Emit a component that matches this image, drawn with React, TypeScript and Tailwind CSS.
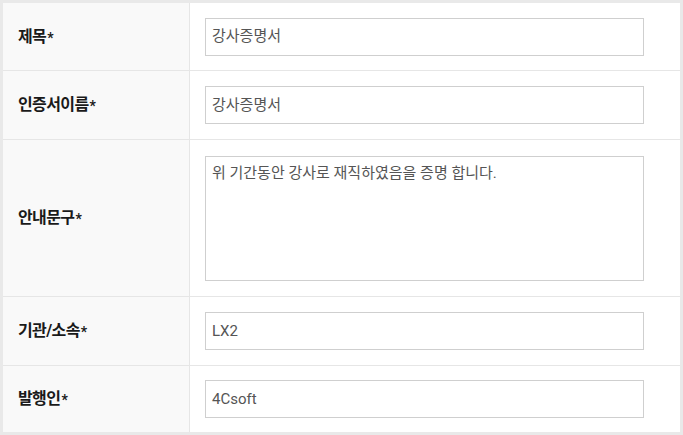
import React from "react";

const font = { fontFamily: 'Roboto, "Noto Sans CJK KR", "Noto Sans", sans-serif' };

function Label({ text }: { text: string }) {
  return (
    <div className="w-[187px] shrink-0 bg-[#f9f9f9] border-r border-[#e6e6e6] flex items-center pl-[15px]">
      <span className="text-[16px] font-bold text-[#1a1a1a] tracking-[-0.6px]">
        {text}
        <span className="text-[14px] relative top-[1px] ml-[1px]">*</span>
      </span>
    </div>
  );
}

function InputRow({ label, value, h, border = true }: { label: string; value: string; h: string; border?: boolean }) {
  return (
    <div className={`flex ${h} ${border ? "border-b border-[#e6e6e6]" : ""}`}>
      <Label text={label} />
      <div className="flex-1 flex items-center pl-[15px]">
        <div className="w-[439px] h-[38px] border border-[#cfcfcf] bg-white flex items-center pl-[6px] text-[15px] text-[#555]">
          {value}
        </div>
      </div>
    </div>
  );
}

export default function App() {
  return (
    <div style={font} className="w-[683px] h-[435px] bg-white border-[3px] border-[#e9e9e9] flex flex-col">
      <InputRow label="제목" value="강사증명서" h="h-[68px]" />
      <InputRow label="인증서이름" value="강사증명서" h="h-[69px]" />
      <div className="flex h-[157px] border-b border-[#e6e6e6]">
        <Label text="안내문구" />
        <div className="flex-1 flex items-center pl-[15px]">
          <div className="w-[439px] h-[125px] border border-[#cfcfcf] bg-white pl-[6px] pt-[5px] text-[15px] text-[#555]">
            위 기간동안 강사로 재직하였음을 증명 합니다.
          </div>
        </div>
      </div>
      <InputRow label="기관/소속" value="LX2" h="h-[69px]" />
      <InputRow label="발행인" value="4Csoft" h="h-[66px]" border={false} />
    </div>
  );
}
